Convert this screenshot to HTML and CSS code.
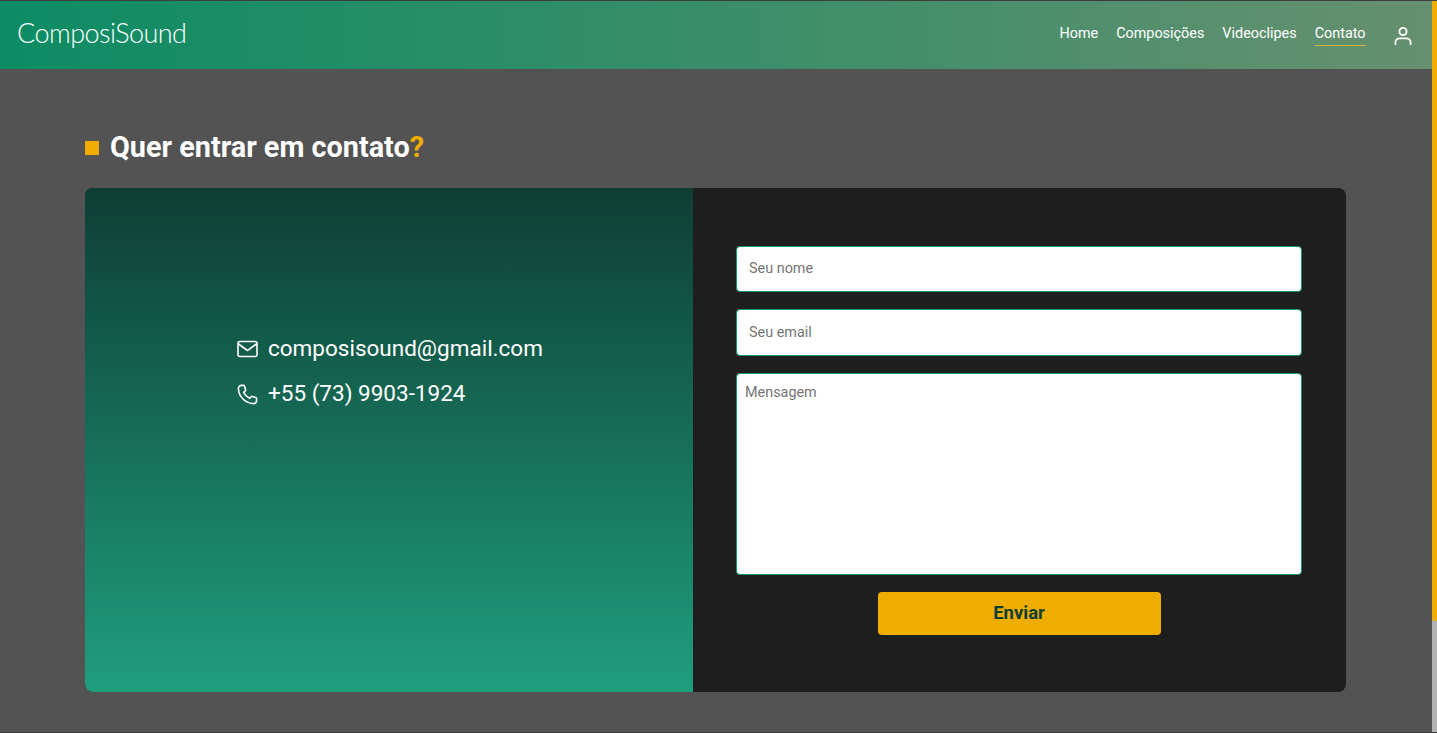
FILE: index.html
```html
<!DOCTYPE html>
<html lang="pt-BR">
<head>
<meta charset="utf-8">
<title>CompoSound - Contato</title>
<link rel="stylesheet" href="styles.css">
</head>
<body>
<div class="window">
  <div class="page">
    <header class="topbar">
      <a class="logo" href="#">ComposiSound</a>
      <nav class="nav">
        <a class="nav-link" href="#">Home</a>
        <a class="nav-link" href="#">Composições</a>
        <a class="nav-link" href="#">Videoclipes</a>
        <a class="nav-link active" href="#">Contato</a>
        <a class="user" href="#" aria-label="Conta">
          <svg width="18" height="20" viewBox="0 0 18 20" fill="none" stroke="#fff" stroke-width="1.8" stroke-linecap="round" stroke-linejoin="round"><circle cx="9" cy="5.5" r="3.6"/><path d="M1.400 18.200v-1.600c0-2.600 2-4.200 4.400-4.200h6.400c2.400 0 4.400 1.600 4.400 4.200v1.600"/></svg>
        </a>
      </nav>
    </header>
    <main class="content">
      <h1 class="title"><span class="square"></span><span class="title-text">Quer entrar em contato<span class="accent">?</span></span></h1>
      <section class="card">
        <div class="info">
          <div class="info-list">
            <div class="info-row">
              <svg class="info-icon" width="21" height="21" viewBox="0 0 21 21" fill="none" stroke="#fff" stroke-width="1.6" stroke-linecap="round" stroke-linejoin="round"><rect x="1" y="2.500" width="19" height="15" rx="2"/><path d="M1.500 5l9 6.500 9-6.500"/></svg>
              <span>composisound@gmail.com</span>
            </div>
            <div class="info-row">
              <svg class="info-icon" width="21" height="21" viewBox="0 0 24 24" fill="none" stroke="#fff" stroke-width="1.8" stroke-linecap="round" stroke-linejoin="round"><path d="M5.200 1.600h2.100c.6 0 1.100.4 1.300 1l1.200 4c.1.5 0 1-.4 1.300L7.600 9.600c1.400 3 3.700 5.300 6.800 6.800l1.700-1.800c.4-.4.9-.5 1.300-.4l4 1.200c.6.2 1 .7 1 1.300v2.100c0 2.200-1.800 3.800-4 3.600C9.200 21.700 2.300 14.800 1.600 5.600 1.400 3.400 3 1.600 5.200 1.600z"/></svg>
              <span>+55 (73) 9903-1924</span>
            </div>
          </div>
        </div>
        <form class="form">
          <input class="field" type="text" placeholder="Seu nome">
          <input class="field field-tall" type="email" placeholder="Seu email">
          <textarea class="message" placeholder="Mensagem"></textarea>
          <button class="send" type="button">Enviar</button>
        </form>
      </section>
    </main>
  </div>
  <div class="scrollbar"><div class="thumb"></div></div>
</div>
</body>
</html>
```
FILE: styles.css
```css
* { box-sizing: border-box; }
html, body { margin: 0; height: 100%; overflow: hidden; }
body { font-family: Roboto, "Liberation Sans", sans-serif; background: #535353; color: #fff; }
.window { height: 733px; display: flex; border-top: 1px solid #3d3d3d; border-bottom: 1px solid #3d3d3d; }
.page { flex: 1; min-width: 0; background: #535353; }
.topbar {
  height: 68px;
  display: flex;
  align-items: center;
  justify-content: space-between;
  padding: 0 20px 0 17px;
  background: linear-gradient(90deg, #0c8c64 0%, #66906f 100%);
}
.logo { font-family: Lato, sans-serif; font-weight: 300; font-size: 27px; letter-spacing: -0.55px; color: #fff; text-decoration: none; line-height: 1; margin-bottom: 6px; }
.nav { display: flex; align-items: center; gap: 18px; }
.nav-link { font-size: 14.4px; font-weight: 400; color: #fff; text-decoration: none; padding: 3px 0 3px; margin-bottom: 2px; border-bottom: 1px solid transparent; }
.nav-link.active { border-bottom-color: #d9b23a; }
.user { display: flex; margin-left: 10.5px; margin-top: 2px; }
.content { padding: 60px 86px 0 85px; }
.title { margin: 0 0 21px; display: flex; align-items: center; gap: 11px; font-size: 28.8px; line-height: 36px; font-weight: 700; color: #fff; }
.title-text { margin-bottom: 2px; }
.square { width: 14px; height: 14px; background: #f0ad00; }
.accent { color: #f0ad00; }
.card { height: 504px; display: flex; border-radius: 8px; overflow: hidden; background: #1e1e1e; }
.info {
  width: 608px;
  padding: 142px 0 0 151px;
  background: linear-gradient(180deg, #0e3e33 0%, #1f9e7d 100%);
}
.info-list { display: flex; flex-direction: column; gap: 10px; }
.info-row { display: flex; align-items: center; gap: 11px; height: 35px; font-size: 22.5px; }
.info-icon { margin: 3px 0 0 1px; }
.info-row span { margin-left: -1px; }
.form { flex: 1; display: flex; flex-direction: column; align-items: center; padding: 58px 44px 0 43px; }
.field, .message { width: 100%; background: #fff; border: 1px solid #0f9a6c; border-radius: 4px; font-family: Roboto, sans-serif; font-size: 14.4px; color: #222; outline: none; }
.field { height: 46px; padding: 0 12px 1px; margin-bottom: 17px; }
.field-tall { height: 47px; margin-bottom: 17px; }
.message { height: 202px; padding: 10px 8px; margin-bottom: 17px; resize: none; display: block; }
.field::placeholder, .message::placeholder { color: #757575; opacity: 1; }
.send { width: 283px; height: 43px; border: 0; border-radius: 4px; padding: 0 0 2px; background: #efad00; color: #0e3e33; font-family: Roboto, sans-serif; font-size: 18.5px; font-weight: 700; }
.scrollbar { width: 5px; background: #b3b3b3; }
.thumb { height: 620px; background: #f0ad00; border-radius: 0 0 0 3px; }
```
